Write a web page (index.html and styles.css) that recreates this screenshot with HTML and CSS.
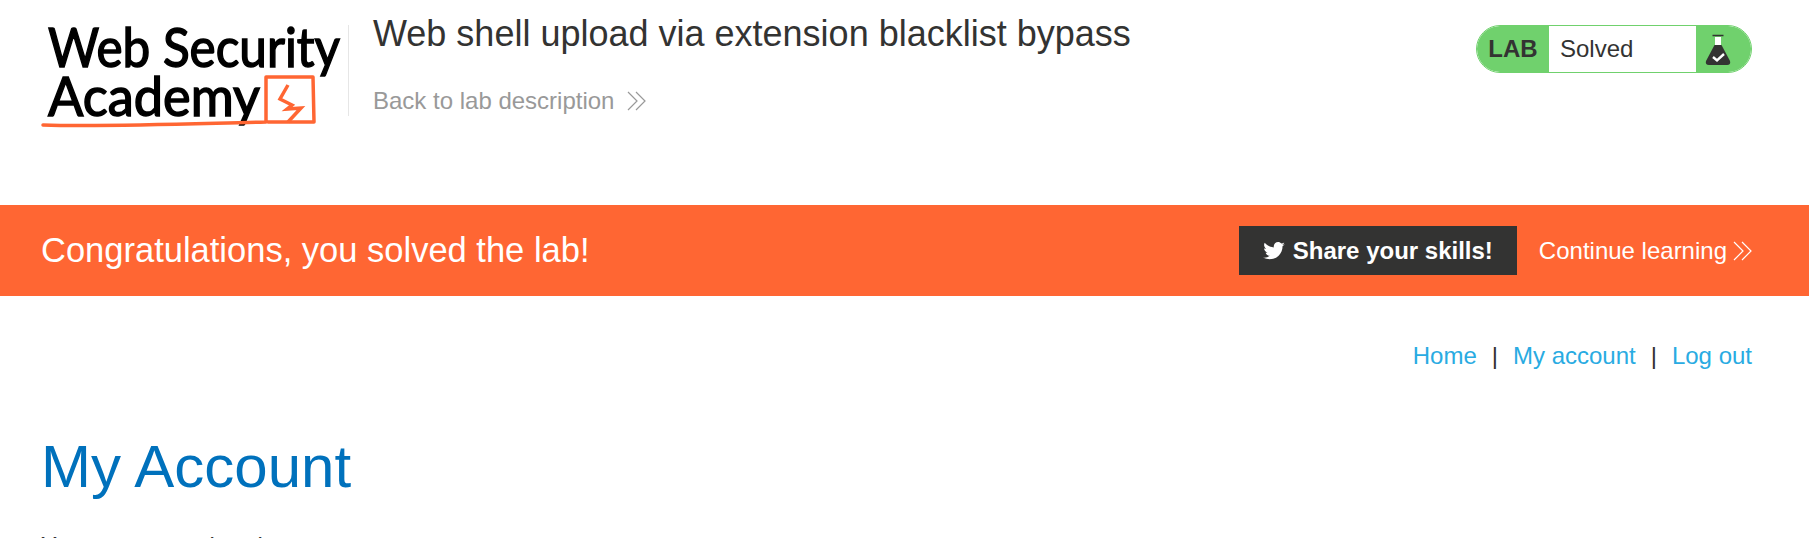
FILE: index.html
```html
<!DOCTYPE html>
<html lang="en">
<head>
<meta charset="utf-8">
<title>Web shell upload via extension blacklist bypass</title>
<link rel="stylesheet" href="styles.css">
</head>
<body>
<header class="lab-header">
  <a class="logo" href="#" aria-label="Web Security Academy">
    <svg class="logo-svg" width="306" height="112" viewBox="0 0 306 112">
      <text class="logo-text" x="6" y="47" textLength="292" lengthAdjust="spacingAndGlyphs">Web Security</text>
      <text class="logo-text" x="6" y="96" textLength="212" lengthAdjust="spacingAndGlyphs">Academy</text>
      <path class="logo-line" d="M1 105 C60 107 140 104 224 102 L224 57 L271 57 L272 102 L226 102"/>
      <path class="logo-zig" d="M246 65 L238 79 L250 85 L245 89 L259 88 L246 102"/>
    </svg>
  </a>
  <div class="title-block">
    <h2 class="lab-title">Web shell upload via extension blacklist bypass</h2>
    <a class="back-link" href="#">Back to lab description
      <svg class="chevrons" width="19" height="20" viewBox="0 0 19 20"><path d="M1 1 L10 10 L1 19 M9 1 L18 10 L9 19"/></svg>
    </a>
  </div>
  <div class="status">
    <span class="status-lab">LAB</span>
    <span class="status-text">Solved</span>
    <span class="status-icon">
      <svg width="26" height="31" viewBox="0 0 26 31">
        <path class="flask-neck" d="M10 3 H16 V11 H10 Z"/>
        <path class="flask-lip" d="M7.500 1.500 H18.500"/>
        <path class="flask-body" d="M9.500 11 H16.500 L25 27 Q26 31 22 31 H4 Q0 31 1 27 Z"/>
        <path class="flask-check" d="M8 23 L12 26.500 L19 20"/>
      </svg>
    </span>
  </div>
</header>
<section class="banner">
  <h4 class="banner-title">Congratulations, you solved the lab!</h4>
  <div class="banner-actions">
    <a class="share" href="#">
      <svg width="22" height="18" viewBox="0 0 24 20"><path d="M24 2.400c-.9.4-1.800.7-2.800.8 1-.6 1.800-1.600 2.200-2.700-1 .6-2 1-3.100 1.200C19.300.7 18 0 16.600 0c-2.700 0-4.900 2.200-4.900 4.900 0 .4 0 .8.100 1.100C7.700 5.800 4.100 3.900 1.700.9c-.4.700-.7 1.600-.7 2.500 0 1.700.9 3.200 2.200 4.100-.8 0-1.600-.2-2.200-.6v.1c0 2.400 1.700 4.400 3.900 4.800-.4.100-.8.200-1.300.2-.3 0-.6 0-.9-.1.600 2 2.400 3.400 4.600 3.400-1.700 1.300-3.800 2.100-6.100 2.100-.4 0-.8 0-1.200-.1C2.200 18.300 4.800 19.100 7.500 19.100c9.100 0 14-7.500 14-14v-.6c1-.7 1.800-1.600 2.500-2.100z"/></svg>
      Share your skills!
    </a>
    <a class="continue" href="#">Continue learning
      <svg class="chevrons" width="19" height="20" viewBox="0 0 19 20"><path d="M1 1 L10 10 L1 19 M9 1 L18 10 L9 19"/></svg>
    </a>
  </div>
</section>
<nav class="top-links">
  <a href="#">Home</a><span class="sep">|</span><a href="#">My account</a><span class="sep">|</span><a href="#">Log out</a>
</nav>
<main class="content">
  <h1 class="page-title">My Account</h1>
  <p class="username">Your username is: wiener</p>
</main>
</body>
</html>
```
FILE: styles.css
```css
* { box-sizing: border-box; }
html, body { margin: 0; padding: 0; height: 538px; overflow: hidden; background: #fff; }
body { font-family: "Liberation Sans", Arial, sans-serif; color: #333332; font-size: 16px; }
a { text-decoration: none; }

.lab-header { height: 205px; display: flex; align-items: flex-start; padding: 0 57px 0 42px; }
.logo { display: block; width: 306px; height: 116px; margin-top: 20px; flex: none; }
.logo-svg { display: block; overflow: visible; }
.logo-text { font-family: Lato, "Open Sans", sans-serif; font-size: 55px; font-weight: 400; fill: #000; stroke: #000; stroke-width: 1.5px; }
.logo-line { fill: none; stroke: #ff6633; stroke-width: 3.5px; stroke-linejoin: round; stroke-linecap: round; }
.logo-zig { fill: none; stroke: #ff6633; stroke-width: 3.5px; stroke-linejoin: miter; }

.title-block { flex: 1; padding-left: 25px; position: relative; }
.title-block::before { content: ""; position: absolute; left: 0; top: 25px; width: 1px; height: 91px; background: #e6e6e6; }
.lab-title { margin: 14px 0 0; font-size: 36px; line-height: 40px; font-weight: 400; color: #333332; }
.back-link { display: inline-flex; align-items: center; gap: 13px; margin-top: 33px; font-size: 24px; line-height: 28px; color: #999; }
.chevrons { flex: none; }
.chevrons path { fill: none; stroke: currentColor; stroke-width: 1.2px; }

.status { display: flex; align-items: stretch; width: 276px; height: 48px; margin-top: 25px; border: 1px solid #70d16d; border-radius: 24px; overflow: hidden; flex: none; background: #fff; }
.status-lab { width: 72px; display: flex; align-items: center; justify-content: center; background: #70d16d; font-weight: 700; font-size: 24px; border-radius: 22px 0 0 22px; }
.status-text { flex: 1; display: flex; align-items: center; padding-left: 11px; font-size: 24px; }
.status-icon { width: 55px; background: #70d16d; display: flex; align-items: center; padding-left: 9px; border-radius: 0 21px 21px 0; }
.flask-neck { fill: #fff; }
.flask-lip { fill: none; stroke: #333332; stroke-width: 1.5px; }
.flask-body { fill: #333332; }
.flask-check { fill: none; stroke: #fff; stroke-width: 2.4px; }

.banner { height: 91px; background: #ff6633; display: flex; align-items: center; justify-content: space-between; padding: 0 57px 0 41px; color: #fff; }
.banner-title { margin: 0; font-size: 34.5px; font-weight: 400; }
.banner-actions { display: flex; align-items: center; gap: 22px; }
.share { display: flex; align-items: center; gap: 8px; height: 49px; padding: 0 24px; background: #333332; color: #fff; font-weight: 700; font-size: 24px; }
.share svg { fill: #fff; }
.continue { display: flex; align-items: center; gap: 6px; color: #fff; font-size: 24px; }

.top-links { display: flex; justify-content: flex-end; align-items: center; gap: 15px; padding: 46px 57px 0 0; font-size: 24px; line-height: 28px; }
.top-links a { color: #29abe2; }
.sep { color: #333332; }

.content { padding: 0 41px; }
.page-title { margin: 62px 0 0; font-size: 60px; line-height: 70px; font-weight: 400; color: #0071bc; }
.username { margin: 30px 0 0; font-size: 24px; line-height: 28px; color: #333332; }
```
